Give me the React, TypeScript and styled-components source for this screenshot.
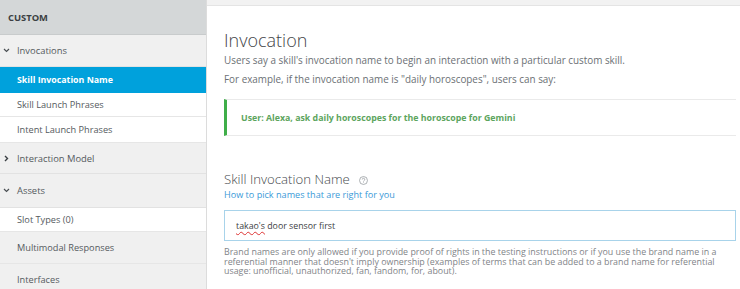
import styled, { createGlobalStyle } from "styled-components";

const GlobalStyle = createGlobalStyle`
  html, body {
    margin: 0;
    padding: 0;
    background: #ffffff;
    font-family: "Open Sans", "Noto Sans", sans-serif;
    overflow: hidden;
  }
`;

const Page = styled.div`
  display: flex;
  width: 740px;
  height: 289px;
  overflow: hidden;
`;

const Sidebar = styled.nav`
  width: 206px;
  flex-shrink: 0;
  background: #f0f0f0;
  border-right: 1px solid #dcdcdc;
  display: flex;
  flex-direction: column;
`;

const SideHeader = styled.div`
  height: 35px;
  flex-shrink: 0;
  background: #d4d7d8;
  display: flex;
  align-items: center;
  padding-left: 8px;
  font-size: 9.4px;
  font-weight: 700;
  color: #3b3f42;
  border-bottom: 1px solid #c8cbcc;
  box-sizing: border-box;
`;

const Group = styled.div<{ $h: number }>`
  height: ${(p) => p.$h}px;
  flex-shrink: 0;
  display: flex;
  align-items: center;
  padding-left: 3px;
  font-size: 9.4px;
  color: #555a5e;
  background: #f0f0f0;
  border-bottom: 1px solid #e2e2e2;
  box-sizing: border-box;
`;

const Chevron = styled.span`
  width: 7px;
  margin-right: 7px;
  display: inline-flex;
  justify-content: center;
`;

const Item = styled.div<{ $h: number; $active?: boolean; $white?: boolean }>`
  height: ${(p) => p.$h}px;
  flex-shrink: 0;
  display: flex;
  align-items: center;
  padding-left: 17px;
  font-size: 9.2px;
  box-sizing: border-box;
  background: ${(p) => (p.$active ? "#00a1dc" : p.$white ? "#ffffff" : "#f0f0f0")};
  color: ${(p) => (p.$active ? "#ffffff" : "#555a5e")};
  font-weight: ${(p) => (p.$active ? 700 : 400)};
  border-bottom: 1px solid ${(p) => (p.$active ? "#00a1dc" : "#e6e6e6")};
  ${(p) => p.$active && "font-size: 8.8px;"}
`;

const Main = styled.main`
  flex: 1;
  display: flex;
  flex-direction: column;
  min-width: 0;
`;

const TopStrip = styled.div`
  height: 5px;
  flex-shrink: 0;
  background: #f2f2f2;
  border-bottom: 1px solid #e4e4e4;
`;

const Content = styled.div`
  padding: 23px 4px 0 17px;
  display: flex;
  flex-direction: column;
`;

const Title = styled.h1`
  margin: 0;
  font-size: 18px;
  font-weight: 300;
  color: #3f4447;
  line-height: 22px;
`;

const Desc = styled.p`
  margin: 0;
  font-size: 9.9px;
  color: #6b7074;
  line-height: 19px;
`;

const Example = styled.div`
  margin-top: 10px;
  height: 37px;
  border-left: 3px solid #3fae49;
  border-top: 1px solid #eaeaea;
  border-bottom: 1px solid #eaeaea;
  display: flex;
  align-items: center;
  padding-left: 14px;
  font-size: 8.8px;
  font-weight: 700;
  color: #5da55e;
  box-sizing: border-box;
`;

const SectionTitle = styled.h2`
  margin: 33px 0 0 0;
  font-size: 13.2px;
  font-weight: 300;
  color: #45494c;
  display: flex;
  align-items: center;
  gap: 9px;
  line-height: 20px;
`;

const HelpIcon = styled.svg`
  width: 9px;
  height: 9px;
  margin-top: 3px;
`;

const Link = styled.a`
  font-size: 9.1px;
  color: #3a9ad8;
  line-height: 12px;
`;

const InputBox = styled.div`
  margin-top: 9px;
  height: 31px;
  border: 1px solid #a8d3ea;
  box-sizing: border-box;
  display: flex;
  align-items: center;
  padding-left: 11px;
  font-size: 8.8px;
  color: #3d4144;
`;

const Squiggle = styled.span`
  text-decoration: underline wavy #d33;
  text-decoration-thickness: 1px;
  text-underline-offset: 2px;
`;

const Note = styled.p`
  margin: 6px 0 0 0;
  font-size: 8.9px;
  line-height: 9.6px;
  color: #7f8488;
`;

const Down = () => (
  <svg width="7" height="5" viewBox="0 0 7 5">
    <path d="M1 1l2.5 2.5L6 1" fill="none" stroke="#4a4f53" strokeWidth="1.2" />
  </svg>
);

const Right = () => (
  <svg width="5" height="7" viewBox="0 0 5 7">
    <path d="M1 1l2.5 2.5L1 6" fill="none" stroke="#3a3f43" strokeWidth="1.4" />
  </svg>
);

export default function App() {
  return (
    <Page>
      <GlobalStyle />
      <Sidebar>
        <SideHeader>CUSTOM</SideHeader>
        <Group $h={32}>
          <Chevron><Down /></Chevron>Invocations
        </Group>
        <Item $h={26} $active>Skill Invocation Name</Item>
        <Item $h={24} $white>Skill Launch Phrases</Item>
        <Item $h={26} $white>Intent Launch Phrases</Item>
        <Group $h={31}>
          <Chevron><Right /></Chevron>Interaction Model
        </Group>
        <Group $h={34}>
          <Chevron><Down /></Chevron>Assets
        </Group>
        <Item $h={24} $white>Slot Types (0)</Item>
        <Item $h={32}>Multimodal Responses</Item>
        <Item $h={32}>Interfaces</Item>
      </Sidebar>
      <Main>
        <TopStrip />
        <Content>
          <Title>Invocation</Title>
          <Desc>
            Users say a skill's invocation name to begin an interaction with a particular custom skill.
            <br />
            For example, if the invocation name is "daily horoscopes", users can say:
          </Desc>
          <Example>User: Alexa, ask daily horoscopes for the horoscope for Gemini</Example>
          <SectionTitle>
            Skill Invocation Name
            <HelpIcon viewBox="0 0 10 10">
              <circle cx="5" cy="5" r="4.4" fill="none" stroke="#8e9498" strokeWidth="0.8" />
              <path d="M3.6 3.9a1.4 1.4 0 1 1 1.9 1.3c-.4.2-.5.4-.5.9" fill="none" stroke="#8e9498" strokeWidth="0.8" />
              <circle cx="5" cy="7.4" r="0.5" fill="#8e9498" />
            </HelpIcon>
          </SectionTitle>
          <Link>How to pick names that are right for you</Link>
          <InputBox>
            <Squiggle>takao's</Squiggle>&nbsp;door sensor first
          </InputBox>
          <Note>
            Brand names are only allowed if you provide proof of rights in the testing instructions or if you use the brand name in a
            referential manner that doesn't imply ownership (examples of terms that can be added to a brand name for referential
            usage: unofficial, unauthorized, fan, fandom, for, about).
          </Note>
        </Content>
      </Main>
    </Page>
  );
}
